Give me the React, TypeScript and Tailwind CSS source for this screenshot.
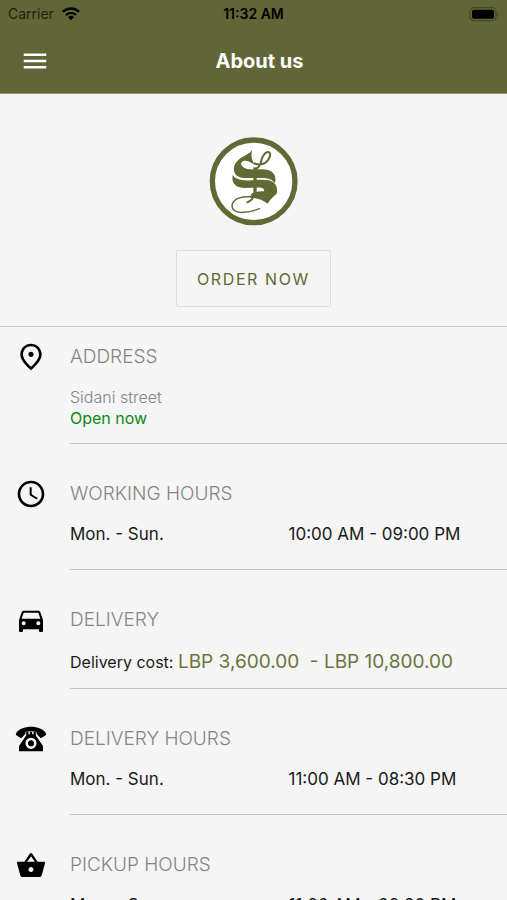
import type { ReactElement, ReactNode } from "react";
import { IoMdBasket } from "react-icons/io";
import { MdAccessTime, MdDirectionsCar, MdMenu, MdOutlinePlace } from "react-icons/md";

interface HoursRow {
  days: string;
  time: string;
}

function StatusBar(): ReactElement {
  return (
    <div className="grid grid-cols-3 items-center px-2 pt-1 text-sm text-black">
      <div className="flex items-center gap-2">
        <span className="text-[#1d1f10]">Carrier</span>
        <svg viewBox="0 0 18 14" className="h-3.5 w-[18px]" fill="none" stroke="currentColor" aria-hidden="true">
          <path d="M1 4.8a11.5 11.5 0 0 1 16 0" strokeWidth="2.4" />
          <path d="M4 8a7.2 7.2 0 0 1 10 0" strokeWidth="2.2" />
          <path d="M9 13.2 6.1 10.2a4.2 4.2 0 0 1 5.8 0Z" fill="currentColor" stroke="none" />
        </svg>
      </div>
      <span className="text-center font-semibold">11:32 AM</span>
      <svg viewBox="0 0 31 15" className="h-[15px] w-[31px] justify-self-end" aria-hidden="true">
        <rect x="2" y="0.7" width="26" height="13" rx="4" fill="none" stroke="#454a25" strokeWidth="1.2" />
        <rect x="4" y="2.7" width="22" height="9" rx="2" fill="#000" />
        <path d="M29.200 5.100c1.600.6 1.600 3.600 0 4.200Z" fill="#454a25" />
      </svg>
    </div>
  );
}

function Header(): ReactElement {
  return (
    <header className="shrink-0 border-b border-[#8a8f68] bg-[#616636]">
      <StatusBar />
      <div className="grid h-[69px] grid-cols-[1fr_auto_1fr] items-center px-5 pt-1">
        <button type="button" aria-label="Open menu" className="w-fit text-white">
          <MdMenu className="size-[30px]" />
        </button>
        <h1 className="pl-3 text-xl font-bold text-white">About us</h1>
      </div>
    </header>
  );
}

function Logo(): ReactElement {
  return (
    <svg viewBox="-2 0 300 315" className="h-[105px] w-[100px]" role="img" aria-label="Sidani">
      <circle cx="147" cy="154" r="124" fill="#fff" stroke="#616a35" strokeWidth="16" />
      <g fill="#616a35">
        <path d="M143 60C135 71 121 75 107 85C92 96 84 112 89 126C93 139 106 144 122 144L178 144C194 145 205 150 210 160C216 144 211 126 190 120C172 114 145 121 128 117C112 113 105 102 112 95C120 88 138 95 151 106C141 90 137 76 143 60Z" />
        <path d="M84 135C80 156 90 170 112 173C132 176 154 170 170 173C182 176 181 187 170 192C158 196 146 197 134 203C154 203 172 208 189 221C196 208 205 201 216 191C221 172 212 156 192 151C168 146 138 154 112 150C98 148 89 144 84 135Z" />
        <path d="M146 112H156V202H146Z" />
        <path d="M140 191C156 183 180 182 203 186L188 213C174 205 158 202 138 204Z" />
      </g>
      <g fill="none" stroke="#616a35" strokeLinecap="round">
        <path d="M151 118C160 114 166 108 168 99C170 84 180 65 191 66C202 69 194 88 185 96C177 103 162 106 150 100" strokeWidth="6" />
        <path d="M146 199C145 206 137 213 128 217" strokeWidth="6" />
        <path d="M156 200C134 198 94 199 84 219C77 238 92 249 116 247C134 246 150 242 164 236" strokeWidth="4.500" />
      </g>
    </svg>
  );
}

function TelephoneIcon(): ReactElement {
  return (
    <svg viewBox="0 0 32 26" className="h-[26px] w-8" fill="currentColor" aria-hidden="true">
      <path d="M1 7.4C3.6 3 9.5.8 16 .8S28.400 3 31 7.400c.5 1-.1 1.700-.8 2.200l-3 2c-.8.5-1.600.4-2.200-.2l-3-3.200c-.5-.6-.4-1.200-.4-2.200-3.200-1-8-1-11.200 0 0 1 .1 1.600-.4 2.200l-3 3.200c-.6.6-1.400.7-2.200.2l-3-2C1.100 9.100.500 8.400 1 7.400Z" />
      <path
        fillRule="evenodd"
        d="M11.200 5.800h2.200v2.400h1.500v-2.400h2.200v2.400h1.500v-2.400h2.200v3.600L27 18.500c.8 1.100 1 2 1 3.200v3.500H4v-3.500c0-1.200.2-2.100 1-3.200l6.200-9.100ZM16 11.700a5.600 5.600 0 1 0 0 11.200 5.600 5.600 0 0 0 0-11.200Zm0 2a3.600 3.600 0 1 1 0 7.200 3.600 3.600 0 0 1 0-7.200Z"
      />
      <path
        fillRule="evenodd"
        d="M16 12.500a4.800 4.800 0 1 0 0 9.600 4.800 4.800 0 0 0 0-9.600Zm0 1.900a2.900 2.900 0 1 1 0 5.800 2.900 2.900 0 0 1 0-5.800Z"
        fill="#f5f5f5"
      />
      <circle cx="16" cy="17.300" r="2.900" />
    </svg>
  );
}

interface SectionProps {
  icon: ReactNode;
  title: string;
  className: string;
  children: ReactNode;
}

function Section({ icon, title, className, children }: SectionProps): ReactElement {
  return (
    <section className="flex">
      <div className={`flex w-[70px] shrink-0 flex-col items-start pl-[15px] ${className}`}>
        <div className="flex h-7 w-8 items-center justify-center text-black">{icon}</div>
      </div>
      <div className={`min-w-0 flex-1 border-b border-[#c4c4c4] ${className}`}>
        <h2 className="mb-4 text-[19px] leading-7 font-light text-[#858585]">{title}</h2>
        {children}
      </div>
    </section>
  );
}

function Hours({ days, time }: HoursRow): ReactElement {
  return (
    <dl className="grid grid-cols-2 text-[17px] leading-[21px] text-[#1a1a1a]">
      <dt>{days}</dt>
      <dd>{time}</dd>
    </dl>
  );
}

export default function App(): ReactElement {
  return (
    <div className="flex h-screen flex-col bg-[#f5f5f5] font-['Inter',sans-serif]">
      <Header />
      <main className="flex-1 overflow-y-auto [scrollbar-width:none]">
        <div className="flex flex-col items-center gap-[15px] border-b border-[#c8c8c8] pt-9 pb-[19px]">
          <Logo />
          <button
            type="button"
            className="h-[57px] rounded-xs border border-[#dedede] px-5 text-base tracking-widest text-[#616a35]"
          >
            ORDER NOW
          </button>
        </div>

        <Section icon={<MdOutlinePlace className="size-8" />} title="ADDRESS" className="pt-4 pb-3.5">
          <address className="text-base leading-[21px] font-light text-[#858585] not-italic">Sidani street</address>
          <p className="text-base leading-[21px] text-[#0b8a12]">Open now</p>
        </Section>
        <Section icon={<MdAccessTime className="size-8" />} title="WORKING HOURS" className="pt-9 pb-6">
          <Hours days="Mon. - Sun." time="10:00 AM - 09:00 PM" />
        </Section>
        <Section icon={<MdDirectionsCar className="size-8" />} title="DELIVERY" className="pt-9 pb-3.5">
          <p className="text-base leading-6 text-[#1a1a1a]">
            Delivery cost: <span className="text-[19px] leading-6 text-[#6b7440]">LBP 3,600.00 &nbsp;- LBP 10,800.00</span>
          </p>
        </Section>
        <Section icon={<TelephoneIcon />} title="DELIVERY HOURS" className="pt-9 pb-6">
          <Hours days="Mon. - Sun." time="11:00 AM - 08:30 PM" />
        </Section>
        <Section icon={<IoMdBasket className="size-8" />} title="PICKUP HOURS" className="pt-9 pb-6">
          <Hours days="Mon. - Sun." time="11:00 AM - 08:30 PM" />
        </Section>
      </main>
    </div>
  );
}
